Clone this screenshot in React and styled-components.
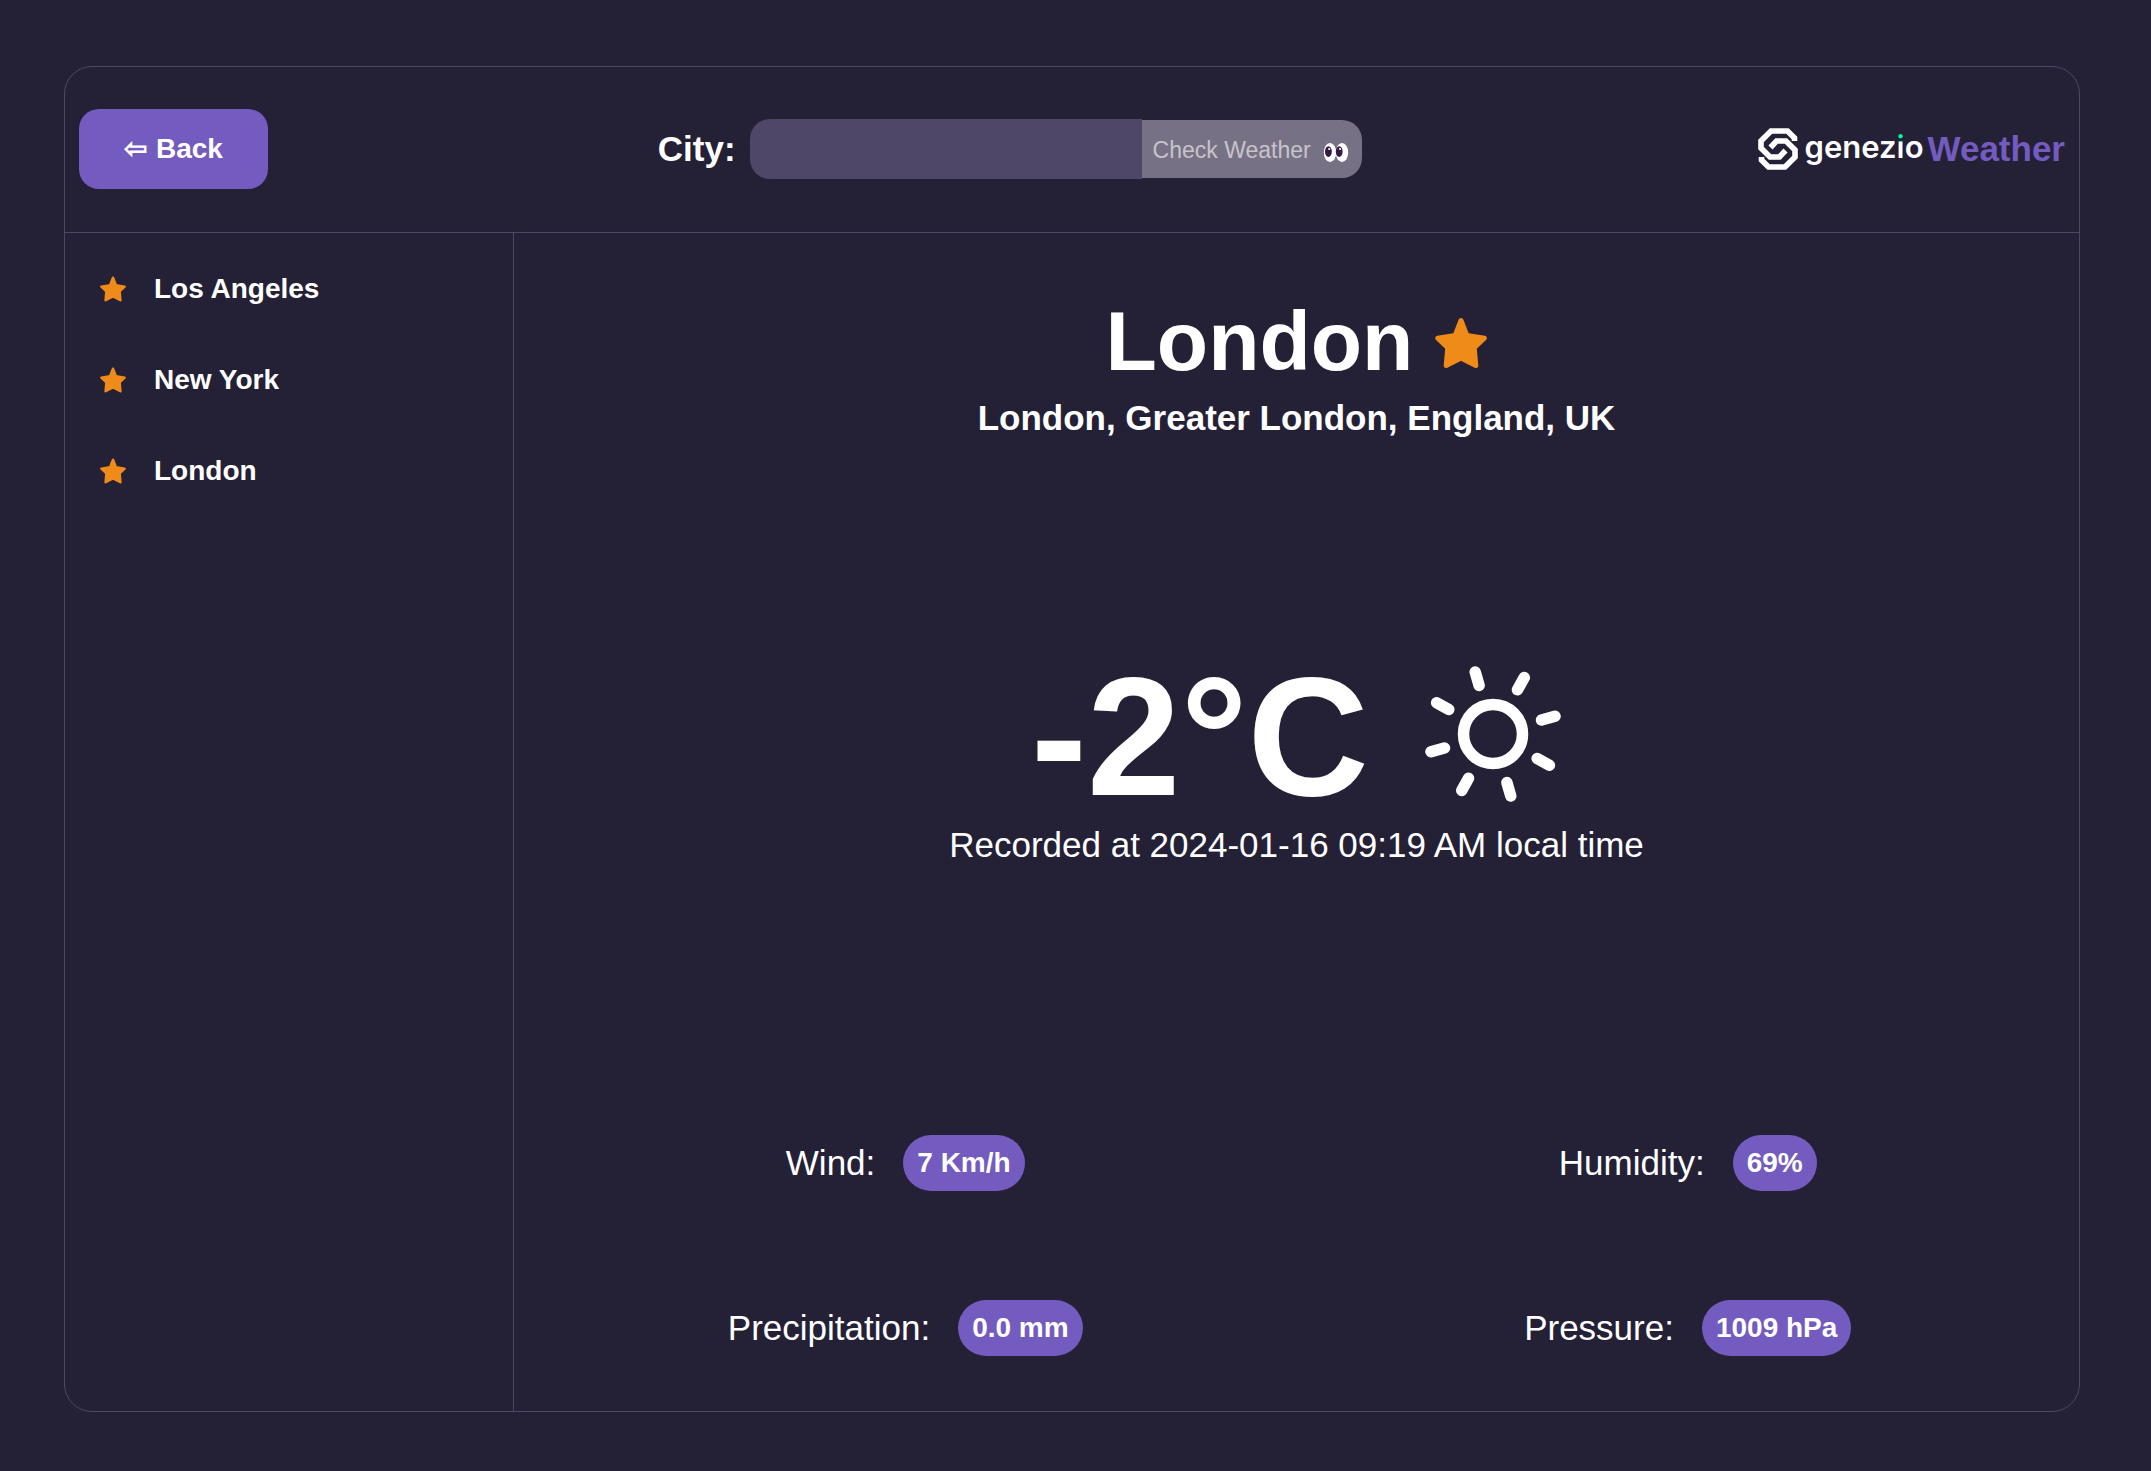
import React, { useState } from "react";
import styled, { createGlobalStyle } from "styled-components";

const c = {
  bg: "#242137",
  line: "#4e4768",
  purple: "#745bbf",
  orange: "#ef8b19",
  white: "#ffffff",
};

const GlobalStyle = createGlobalStyle`
  *, *::before, *::after { box-sizing: border-box; }
  body {
    margin: 0;
    background: ${c.bg};
    color: ${c.white};
    font-family: Arial, "Liberation Sans", sans-serif;
    font-size: 28px;
  }
  h1, p, ul, dl, dd { margin: 0; padding: 0; }
  button, input { font-family: inherit; border: 0; }
`;

const Page = styled.div`
  min-height: 100vh;
  display: flex;
  padding: 66px 71px 59px 64px;
`;

const Card = styled.div`
  flex: 1;
  display: flex;
  flex-direction: column;
  border: 1px solid ${c.line};
  border-radius: 28px;
`;

const Header = styled.header`
  display: flex;
  align-items: center;
  justify-content: space-between;
  padding: 42px 14px 43px;
  border-bottom: 1px solid ${c.line};
`;

const BackButton = styled.button`
  display: flex;
  align-items: center;
  gap: 9px;
  height: 80px;
  padding: 0 45px 1px;
  border-radius: 20px;
  background: ${c.purple};
  color: ${c.white};
  font-size: 28px;
  font-weight: 700;
  cursor: pointer;
`;

const BackArrow = styled.span`
  line-height: 30px;
`;

const Search = styled.form`
  display: flex;
  align-items: center;
`;

const SearchLabel = styled.label`
  margin-right: 14px;
  font-size: 35px;
  font-weight: 700;
`;

const SearchInput = styled.input`
  width: 392px;
  height: 60px;
  padding: 0 14px;
  border-radius: 20px 0 0 20px;
  background: ${c.line};
  color: ${c.white};
  font-size: 28px;
  outline: none;
`;

const SearchButton = styled.button`
  display: flex;
  align-items: center;
  gap: 12px;
  width: 220px;
  height: 58px;
  padding: 2px 11px 0;
  border-radius: 0 20px 20px 0;
  background: #777186;
  color: #c6c4c9;
  font-size: 23px;
  white-space: nowrap;
`;

const Brand = styled.div`
  display: flex;
  align-items: center;
  padding-left: 6px;
`;

const BrandName = styled.span`
  margin: 0 4px 0 7px;
  padding-bottom: 4px;
  font-family: Inter, sans-serif;
  font-size: 31px;
  line-height: 40px;
  font-weight: 600;
`;

const BrandI = styled.span`
  background: linear-gradient(#0ef5a0 0 38%, ${c.white} 38%);
  background-clip: text;
  color: transparent;
`;

const BrandProduct = styled.span`
  color: ${c.purple};
  font-size: 35px;
  font-weight: 700;
`;

const Body = styled.div`
  flex: 1;
  display: flex;
`;

const Sidebar = styled.nav`
  width: 449px;
  padding-top: 10px;
  border-right: 1px solid ${c.line};
`;

const CityList = styled.ul`
  list-style: none;
`;

const CityLink = styled.a`
  display: flex;
  align-items: center;
  gap: 27px;
  height: 91px;
  padding-left: 34px;
  color: ${c.white};
  font-weight: 700;
  text-decoration: none;
`;

const Main = styled.main`
  flex: 1;
  display: flex;
  flex-direction: column;
  text-align: center;
`;

const Place = styled.section`
  padding-top: 60px;
`;

const PlaceTitle = styled.div`
  display: flex;
  align-items: center;
  justify-content: center;
  gap: 20px;
  padding-left: 2px;
`;

const PlaceName = styled.h1`
  font-size: 84px;
  line-height: 96px;
  font-weight: 700;
`;

const StarButton = styled.button`
  display: flex;
  padding: 4px 0 0;
  background: none;
  cursor: pointer;
`;

const PlaceRegion = styled.p`
  margin-top: 10px;
  font-size: 35px;
  line-height: 38px;
  font-weight: 700;
`;

const Reading = styled.section`
  flex: 1;
  display: flex;
  flex-direction: column;
  justify-content: center;
  padding-bottom: 2px;
`;

const Temperature = styled.div`
  display: flex;
  align-items: center;
  justify-content: center;
  gap: 55px;
  font-size: 168px;
  line-height: 174px;
  font-weight: 700;
`;

const Recorded = styled.p`
  font-size: 35px;
  line-height: 42px;
`;

const Stats = styled.dl`
  display: grid;
  grid-template-columns: 1fr 1fr;
  grid-auto-rows: 165px;
  padding-bottom: 1px;
`;

const Stat = styled.div`
  display: flex;
  align-items: center;
  justify-content: center;
  gap: 28px;
`;

const StatLabel = styled.dt`
  font-size: 35px;
`;

const StatValue = styled.dd`
  padding: 0 14px;
  border-radius: 28px;
  background: ${c.purple};
  line-height: 56px;
  font-weight: 700;
`;

const Star = ({ size }) => (
  <svg width={size} height={size} viewBox="0 0 56 56" aria-hidden="true">
    <path
      d="M28 5.500 L33.800 20.500 L51.300 23.300 L41.200 32.800 L42.800 50.500 L28 43 L13.200 50.500 L14.800 32.800 L4.700 23.300 L22.200 20.500 Z"
      fill={c.orange}
      stroke={c.orange}
      strokeWidth="5"
      strokeLinejoin="round"
    />
  </svg>
);

const rays = [0, 1, 2, 3, 4, 5, 6, 7].map((n) => n * 45 - 16);

const Sun = () => (
  <svg width="138" height="144" viewBox="0 0 138 144" aria-label="Sunny" role="img">
    <g fill="none" stroke={c.white} strokeWidth="11.5" strokeLinecap="round">
      <circle cx="69" cy="69" r="29.5" />
      {rays.map((a) => (
        <path key={a} d="M69 4.500V18.500" transform={`rotate(${a} 69 69)`} />
      ))}
    </g>
  </svg>
);

const Eyes = () => (
  <svg width="26" height="26" viewBox="0 0 26 26" aria-hidden="true">
    <ellipse cx="7" cy="15.5" rx="6.2" ry="9.600" fill="#fff" />
    <ellipse cx="19" cy="15.5" rx="6.2" ry="9.600" fill="#fff" />
    <ellipse cx="5.4" cy="14.6" rx="3.4" ry="5.300" fill="#321b41" />
    <ellipse cx="16.200" cy="14.6" rx="3.4" ry="5.300" fill="#321b41" />
    <circle cx="6.2" cy="12" r="1.100" fill="#fff" />
    <circle cx="17" cy="12" r="1.100" fill="#fff" />
  </svg>
);

const BrandMark = () => (
  <svg width="40" height="42" viewBox="0 0 40 42" aria-hidden="true">
    <g fill="none" stroke={c.white} strokeWidth="5.6">
      <path d="M36.500 13V10L29.500 3H13L3 13V20L12 29H21.500L27.500 22.500" />
      <path d="M3.500 29V32L10.500 39H27L37 29V22L28 13H18.500L12.500 19.500" />
    </g>
  </svg>
);

const cities = ["Los Angeles", "New York", "London"];

const stats = [
  ["Wind:", "7 Km/h"],
  ["Humidity:", "69%"],
  ["Precipitation:", "0.0 mm"],
  ["Pressure:", "1009 hPa"],
];

export default function App() {
  const [city, setCity] = useState("");
  return (
    <>
      <GlobalStyle />
      <Page>
        <Card>
          <Header>
            <BackButton type="button">
              <BackArrow>⇦</BackArrow>
              Back
            </BackButton>
            <Search onSubmit={(e) => e.preventDefault()}>
              <SearchLabel htmlFor="city">City:</SearchLabel>
              <SearchInput id="city" value={city} onChange={(e) => setCity(e.target.value)} />
              <SearchButton type="submit" disabled={!city}>
                Check Weather
                <Eyes />
              </SearchButton>
            </Search>
            <Brand>
              <BrandMark />
              <BrandName>
                genez<BrandI>i</BrandI>o
              </BrandName>
              <BrandProduct>Weather</BrandProduct>
            </Brand>
          </Header>
          <Body>
            <Sidebar aria-label="Favourite cities">
              <CityList>
                {cities.map((name) => (
                  <li key={name}>
                    <CityLink href="#">
                      <Star size={28} />
                      {name}
                    </CityLink>
                  </li>
                ))}
              </CityList>
            </Sidebar>
            <Main>
              <Place>
                <PlaceTitle>
                  <PlaceName>London</PlaceName>
                  <StarButton type="button" aria-label="Remove from favourites">
                    <Star size={56} />
                  </StarButton>
                </PlaceTitle>
                <PlaceRegion>London, Greater London, England, UK</PlaceRegion>
              </Place>
              <Reading>
                <Temperature>
                  <span>-2°C</span>
                  <Sun />
                </Temperature>
                <Recorded>Recorded at 2024-01-16 09:19 AM local time</Recorded>
              </Reading>
              <Stats>
                {stats.map(([label, value]) => (
                  <Stat key={label}>
                    <StatLabel>{label}</StatLabel>
                    <StatValue>{value}</StatValue>
                  </Stat>
                ))}
              </Stats>
            </Main>
          </Body>
        </Card>
      </Page>
    </>
  );
}
